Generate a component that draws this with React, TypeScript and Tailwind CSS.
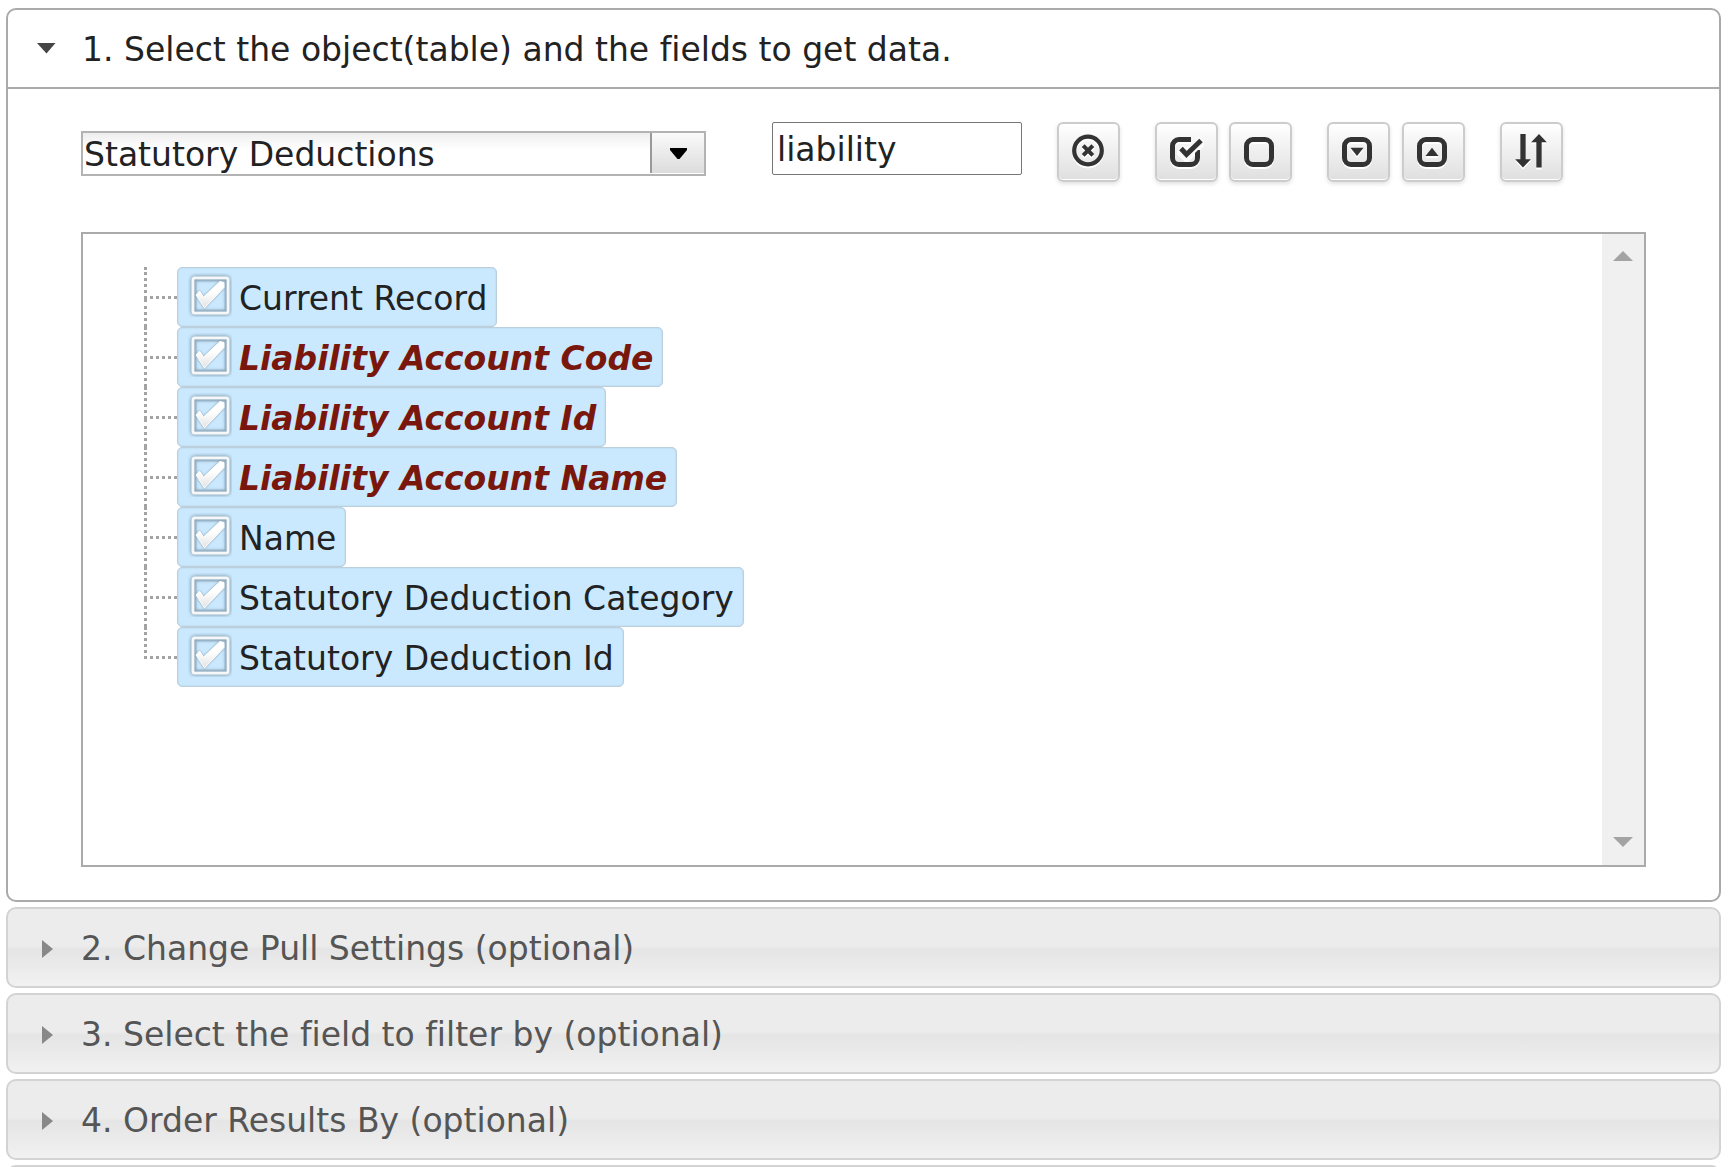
import React, { useState } from "react";

const FIELDS = [
  { label: "Current Record", match: false },
  { label: "Liability Account Code", match: true },
  { label: "Liability Account Id", match: true },
  { label: "Liability Account Name", match: true },
  { label: "Name", match: false },
  { label: "Statutory Deduction Category", match: false },
  { label: "Statutory Deduction Id", match: false },
];

const SECTIONS = [
  "2. Change Pull Settings (optional)",
  "3. Select the field to filter by (optional)",
  "4. Order Results By (optional)",
];

const SQUARE = "M10 4.5h12a6.5 6.5 0 0 1 6.5 6.5v12a6.5 6.5 0 0 1-6.5 6.5H10A6.5 6.5 0 0 1 3.5 23V11A6.5 6.5 0 0 1 10 4.5Z";

function Glyph({ children }: { children: React.ReactNode }) {
  return (
    <svg
      viewBox="0 -2 35 38"
      className="h-[38px] w-[35px] drop-shadow-[0_2px_0_#ffffff]"
      fill="none"
      stroke="#333333"
      aria-hidden="true"
    >
      {children}
    </svg>
  );
}

function ToolButton({ label, children }: { label: string; children: React.ReactNode }) {
  return (
    <button
      type="button"
      aria-label={label}
      className="flex h-[60px] w-[63px] items-center justify-center rounded-md border-2 border-[#cccccc] bg-linear-to-b from-white to-[#dfdfdf] shadow-[0_2px_4px_rgba(0,0,0,0.12),inset_0_-1px_0_#ffffff]"
    >
      {children}
    </button>
  );
}

function FieldRow({ label, match, last }: { label: string; match: boolean; last: boolean }) {
  const [checked, setChecked] = useState(true);
  return (
    <li className="flex h-[60px]">
      <span className="flex w-[33px] shrink-0 flex-col" aria-hidden="true">
        <span className="h-8 border-b-3 border-l-3 border-dotted border-[#a3a3a3]" />
        {!last && <span className="flex-1 border-l-3 border-dotted border-[#a3a3a3]" />}
      </span>
      <label className="flex items-center rounded-[5px] border border-[#bccfdc] bg-[#cbe9fe] pr-[9px] pl-[10px] shadow-[inset_0_0_2px_#b3cbdb]">
        <span className="relative mr-[7px] mb-1 block size-[44px]">
          <input
            type="checkbox"
            checked={checked}
            onChange={(e) => setChecked(e.target.checked)}
            className="absolute inset-0 size-full cursor-pointer appearance-none"
          />
          <svg viewBox="0 0 44 44" className="pointer-events-none absolute inset-0" aria-hidden="true">
            <defs>
              <linearGradient id="tick" x1="0" y1="0" x2="0" y2="1">
                <stop offset="0.4" stopColor="#ffffff" />
                <stop offset="1" stopColor="#e2e2e2" />
              </linearGradient>
            </defs>
            <rect
              x="5"
              y="5"
              width="35"
              height="35"
              rx="2"
              fill="none"
              stroke="#f5f7f9"
              strokeWidth="3"
              className="drop-shadow-[0_0_2px_#5d7686]"
            />
            <rect x="7.500" y="7.500" width="30" height="30" fill="none" stroke="#8ea9ba" strokeWidth="2" opacity="0.6" />
            {checked && (
              <path
                d="M8 22 11.500 18 15.500 24 32 8.500 36 9.500 36 14.500 16.500 35Z"
                fill="url(#tick)"
                stroke="#ffffff"
                strokeLinejoin="round"
                className="drop-shadow-[0_0_1px_#7f98a8]"
              />
            )}
          </svg>
        </span>
        <span className={match ? "pt-1 font-bold text-[#7a170c] italic" : "pt-1 text-[#222222]"}>{label}</span>
      </label>
    </li>
  );
}

export default function App() {
  const [query, setQuery] = useState("liability");
  return (
    <main className="flex h-screen flex-col gap-[5px] overflow-hidden bg-white pt-2 pr-[7px] pl-[6px] font-['DejaVu_Sans',Verdana,sans-serif] text-[33px] leading-[40px] text-[#222222] [font-variant-ligatures:none]">
      <section className="shrink-0 rounded-[10px] border-2 border-[#aaaaaa]">
        <h3 className="border-b-2 border-[#aaaaaa]">
          <button type="button" aria-expanded="true" className="flex h-[77px] w-full items-center pl-[29px] text-left">
            <svg viewBox="0 0 20 14" className="mr-[25px] h-[14px] w-5" aria-hidden="true">
              <path d="M0 1h18.500L9.500 11.500Z" fill="#454545" />
            </svg>
            <span className="pt-[2px]">1. Select the object(table) and the fields to get data.</span>
          </button>
        </h3>
        <div className="px-[73px] pt-[33px] pb-[33px]">
          <div className="flex items-start">
            <div className="relative mt-[9px] h-[45px] w-[625px]">
              <select
                aria-label="Object"
                className="size-full appearance-none border-2 border-[#b3b3b3] bg-linear-to-b from-[#eeeeee] to-white to-40% pt-[2px] pr-14 pl-px"
              >
                <option>Statutory Deductions</option>
              </select>
              <span className="pointer-events-none absolute top-[2px] right-[2px] flex h-10 w-[54px] items-center justify-center border-l-2 border-[#999999] bg-linear-to-b from-[#fafafa] to-[#dcdcdc]">
                <svg viewBox="0 0 18 12" className="h-3 w-[18px]" aria-hidden="true">
                  <path d="M1 1h17v2L10.500 12h-2L1 3Z" fill="#000000" />
                </svg>
              </span>
            </div>
            <input
              type="text"
              aria-label="Filter fields"
              value={query}
              onChange={(e) => setQuery(e.target.value)}
              className="ml-[66px] h-[53px] w-[250px] rounded-[2px] border border-[#767676] bg-white pt-[2px] pl-1"
            />
            <div className="ml-[35px] flex gap-[35px]">
              <ToolButton label="Clear">
                <Glyph>
                  <circle cx="17" cy="15.500" r="13.800" strokeWidth="4.200" />
                  <path d="m12.200 10.700 9.600 9.600M21.800 10.700l-9.600 9.600" strokeWidth="4" />
                </Glyph>
              </ToolButton>
              <div className="flex gap-[11px]">
                <ToolButton label="Check all">
                  <Glyph>
                    <path
                      d="M22 4.500H10A6.500 6.500 0 0 0 3.500 11v12a6.500 6.500 0 0 0 6.500 6.500h12a6.500 6.500 0 0 0 6.500-6.500v-8"
                      strokeWidth="5"
                    />
                    <path d="m11 13 6.500 6.500L33 4" stroke="#fafafa" strokeWidth="10" />
                    <path d="m12 13.500 5.500 6L32 5.500" strokeWidth="5" />
                  </Glyph>
                </ToolButton>
                <ToolButton label="Uncheck all">
                  <Glyph>
                    <path d={SQUARE} strokeWidth="5" />
                  </Glyph>
                </ToolButton>
              </div>
              <div className="flex gap-3">
                <ToolButton label="Expand all">
                  <Glyph>
                    <path d={SQUARE} strokeWidth="5" />
                    <path d="M9.500 12.700h13L16 21Z" fill="#333333" stroke="none" />
                  </Glyph>
                </ToolButton>
                <ToolButton label="Collapse all">
                  <Glyph>
                    <path d={SQUARE} strokeWidth="5" />
                    <path d="M9.500 21h13L16 12.700Z" fill="#333333" stroke="none" />
                  </Glyph>
                </ToolButton>
              </div>
              <ToolButton label="Sort">
                <Glyph>
                  <path d="M9-1v26M25 6v26.500" strokeWidth="5.300" />
                  <path d="M1.200 24.300h15.600L9 32.500ZM17.200 7.200h15.600L25-1Z" fill="#333333" stroke="none" />
                </Glyph>
              </ToolButton>
            </div>
          </div>
          <div className="mt-[50px] flex h-[635px] justify-between border-2 border-[#aaaaaa]">
            <ul className="pt-[33px] pl-[61px]">
              {FIELDS.map((f, i) => (
                <FieldRow key={f.label} label={f.label} match={f.match} last={i === FIELDS.length - 1} />
              ))}
            </ul>
            <div
              className="flex w-[42px] flex-col items-center justify-between bg-[#f0f0f0] pt-[17px] pb-[18px]"
              aria-hidden="true"
            >
              <svg viewBox="0 0 20 10" className="h-[10px] w-5">
                <path d="M10 0 20 10H0Z" fill="#a3a3a3" />
              </svg>
              <svg viewBox="0 0 20 10" className="h-[10px] w-5">
                <path d="M0 0h20L10 10Z" fill="#a3a3a3" />
              </svg>
            </div>
          </div>
        </div>
      </section>
      {SECTIONS.map((title) => (
        <h3 key={title} className="shrink-0">
          <button
            type="button"
            aria-expanded="false"
            className="flex h-[81px] w-full items-center rounded-[10px] border-2 border-[#d3d3d3] bg-linear-to-b from-[#ececec] from-48% via-[#e5e5e5] via-52% to-[#f1f1f1] pl-[34px] text-left text-[#555555]"
          >
            <svg viewBox="0 0 11 20" className="mr-[28px] h-5 w-[11px]" aria-hidden="true">
              <path d="M0 2v18l11-9Z" fill="#888888" />
            </svg>
            <span className="pt-[2px]">{title}</span>
          </button>
        </h3>
      ))}
      <div className="h-[81px] shrink-0 rounded-[10px] border-2 border-[#d3d3d3] bg-[#ececec]" />
    </main>
  );
}
